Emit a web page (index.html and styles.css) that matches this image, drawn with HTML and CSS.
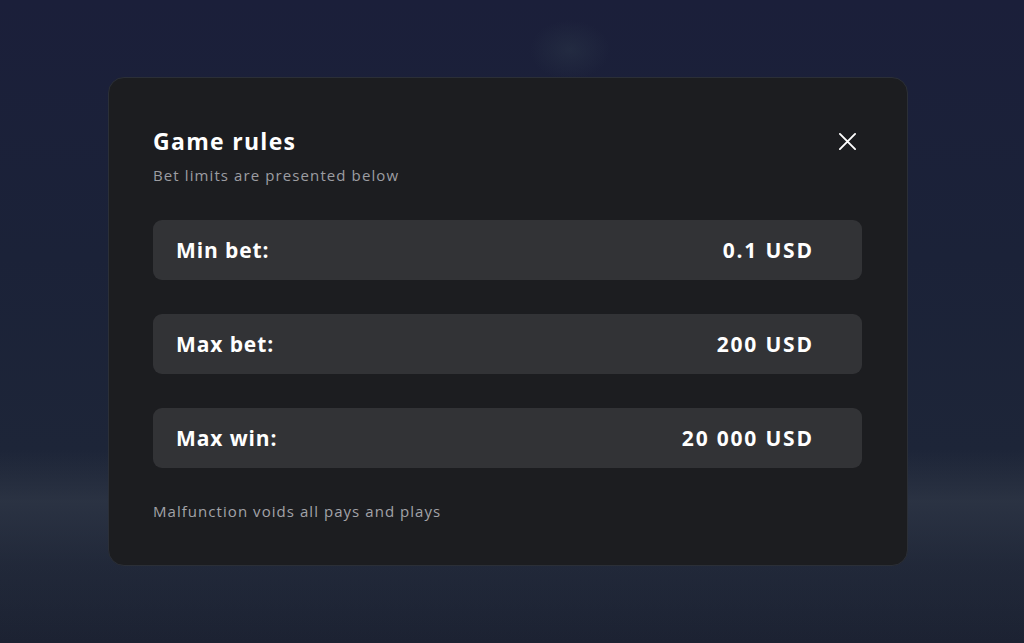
FILE: index.html
```html
<!DOCTYPE html>
<html>
<head>
<meta charset="utf-8">
<link rel="stylesheet" href="styles.css">
</head>
<body>
<div class="backdrop">
  <div class="glow"></div>
  <section class="dialog">
    <header class="dialog-head">
      <div class="titles">
        <h1 class="title">Game rules</h1>
        <p class="subtitle">Bet limits are presented below</p>
      </div>
      <button class="close" aria-label="Close">
        <svg width="20" height="20" viewBox="0 0 20 20"><path d="M2 2 L18 18 M18 2 L2 18" stroke="#fff" stroke-width="2" stroke-linecap="round" fill="none"/></svg>
      </button>
    </header>
    <div class="rows">
      <div class="row"><span class="label">Min bet:</span><span class="value">0.1 USD</span></div>
      <div class="row"><span class="label">Max bet:</span><span class="value">200 USD</span></div>
      <div class="row"><span class="label">Max win:</span><span class="value">20 000 USD</span></div>
    </div>
    <p class="note">Malfunction voids all pays and plays</p>
  </section>
</div>
</body>
</html>
```

FILE: styles.css
```css
* { box-sizing: border-box; }
html, body { margin: 0; padding: 0; }
body {
  width: 1024px;
  height: 643px;
  overflow: hidden;
  font-family: "Open Sans", "Noto Sans", sans-serif;
}
.backdrop {
  position: relative;
  width: 1024px;
  height: 643px;
  padding: 77px 0 0 108px;
  display: flex;
  justify-content: flex-start;
  align-items: flex-start;
  background:
    linear-gradient(180deg, rgba(40,48,64,0) 0%, rgba(40,48,64,0) 70%, rgba(44,52,68,0.9) 78%, rgba(40,48,64,0.4) 88%, rgba(30,36,50,0) 100%),
    linear-gradient(180deg, #1b1f3a 0%, #1b2238 40%, #1d2538 70%, #1c2232 100%);
}
.glow {
  position: absolute;
  left: 530px;
  top: 20px;
  width: 80px;
  height: 60px;
  border-radius: 50%;
  background: radial-gradient(closest-side, rgba(40,50,70,0.6), rgba(40,50,70,0));
}
.dialog {
  position: relative;
  width: 800px;
  height: 489px;
  background: #1c1d20;
  border: 1px solid #2b2f37;
  border-radius: 16px;
  padding: 43px 45px 0 44px;
  color: #fff;
}
.dialog-head {
  display: flex;
  justify-content: space-between;
  align-items: flex-start;
}
.title {
  margin: 0;
  font-size: 23px;
  font-weight: 700;
  line-height: 40px;
  letter-spacing: 1.3px;
}
.subtitle {
  margin: 3px 0 0 0;
  font-size: 15px;
  line-height: 22px;
  color: #9c9da2;
  letter-spacing: 1.1px;
}
.close {
  background: none;
  border: 0;
  padding: 0;
  margin: 11px 5px 0 0;
  width: 19px;
  height: 19px;
  cursor: pointer;
}
.close svg { display: block; width: 19px; height: 19px; }
.rows {
  margin-top: 34px;
  display: flex;
  flex-direction: column;
  gap: 34px;
}
.row {
  height: 60px;
  background: #323336;
  border-radius: 9px;
  padding: 0 50px 0 23px;
  display: flex;
  justify-content: space-between;
  align-items: center;
  font-size: 21px;
  font-weight: 700;
}
.label { letter-spacing: 0.9px; }
.value { letter-spacing: 1.8px; margin-right: -1.8px; }
.note {
  margin: 33px 0 0 0;
  font-size: 15px;
  line-height: 20px;
  color: #a2a3a8;
  letter-spacing: 1.05px;
}
```
